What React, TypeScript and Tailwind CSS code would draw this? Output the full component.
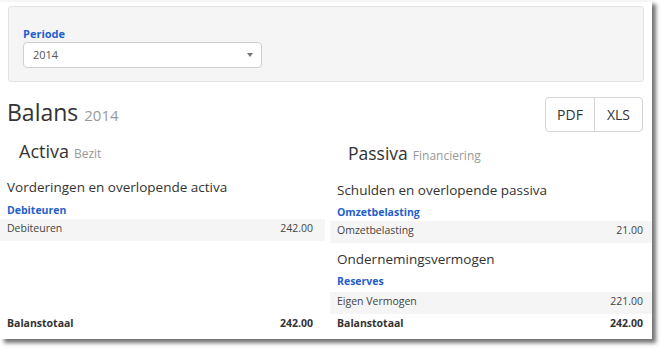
import React from "react";

type Row = { label: string; amount: string };

function SectionRow({ row, padRight }: { row: Row; padRight: string }) {
  return (
    <div className={`flex h-[22px] items-start justify-between bg-[#f5f5f5] pl-[7px] text-[10.5px] leading-[18px] text-[#444] ${padRight}`}>
      <span>{row.label}</span>
      <span>{row.amount}</span>
    </div>
  );
}

function Total({ amount, padRight }: { amount: string; padRight: string }) {
  return (
    <div className={`mt-auto flex justify-between pl-[7px] text-[10.5px] font-bold leading-[16px] text-[#333] ${padRight}`}>
      <span>Balanstotaal</span>
      <span>{amount}</span>
    </div>
  );
}

export default function App() {
  return (
    <div
      className="h-[351px] w-[663px] bg-white"
      style={{ fontFamily: '"Open Sans", "Noto Sans", sans-serif' }}
    >
      <div className="flex h-[339px] w-[652px] flex-col bg-white shadow-[4px_4px_4px_rgba(0,0,0,0.55)]">
        <div className="h-[2px] bg-[#f6f6f6]" />
        {/* filter panel */}
        <div className="ml-[8px] mt-[4px] h-[76px] w-[636px] rounded-[3px] border border-[#e3e3e3] bg-[#f5f5f5] pl-[14px] pt-[20px]">
          <div className="text-[11px] font-bold leading-[14px] text-[#1f5fcc]">Periode</div>
          <div className="relative mt-[1px] flex h-[26px] w-[239px] items-center rounded-[4px] border border-[#cfcfcf] bg-white pl-[9px] text-[11px] text-[#555]">
            2014
            <span className="absolute right-[8px] top-[10px] h-0 w-0 border-l-[3.5px] border-r-[3.5px] border-t-[4px] border-l-transparent border-r-transparent border-t-[#777]" />
          </div>
        </div>

        {/* title + export buttons */}
        <div className="mt-[15px] flex items-start justify-between pl-[7px] pr-[9px]">
          <div className="flex items-baseline gap-[6px] pt-[1px]">
            <span className="text-[23px] leading-[28px] text-[#333]">Balans</span>
            <span className="text-[15px] text-[#999]">2014</span>
          </div>
          <div className="flex h-[35px] rounded-[4px] border border-[#d5d5d5] bg-white text-[14px] text-[#333]">
            <div className="flex w-[49px] items-center justify-center border-r border-[#d5d5d5]">PDF</div>
            <div className="flex w-[47px] items-center justify-center">XLS</div>
          </div>
        </div>

        {/* two balance columns */}
        <div className="mt-[7px] grid flex-1 grid-cols-[325px_322px] gap-x-[5px] pb-[8px]">
          <div className="flex flex-col">
            <div className="flex items-baseline gap-[5px] pl-[19px] leading-[24px]">
              <span className="text-[18px] text-[#333]">Activa</span>
              <span className="text-[12px] text-[#999]">Bezit</span>
            </div>
            <div className="mt-[11px] pl-[7px] text-[13.5px] leading-[20px] text-[#333]">
              Vorderingen en overlopende activa
            </div>
            <div className="mt-[5px] pl-[7px] text-[10.5px] font-bold leading-[16px] text-[#1f5fcc]">Debiteuren</div>
            <div className="mt-[1px]">
              <SectionRow row={{ label: "Debiteuren", amount: "242.00" }} padRight="pr-[12px]" />
            </div>
            <Total amount="242.00" padRight="pr-[12px]" />
          </div>

          <div className="flex flex-col pt-[2px]">
            <div className="flex items-baseline gap-[5px] pl-[18px] leading-[24px]">
              <span className="text-[17.5px] text-[#333]">Passiva</span>
              <span className="text-[12px] text-[#999]">Financiering</span>
            </div>
            <div className="mt-[12px] pl-[7px] text-[13.5px] leading-[20px] text-[#333]">
              Schulden en overlopende passiva
            </div>
            <div className="mt-[4px] pl-[7px] text-[10.5px] font-bold leading-[16px] text-[#1f5fcc]">Omzetbelasting</div>
            <div className="mt-[1px]">
              <SectionRow row={{ label: "Omzetbelasting", amount: "21.00" }} padRight="pr-[9px]" />
            </div>
            <div className="mt-[6px] pl-[7px] text-[13.5px] leading-[20px] text-[#333]">Ondernemingsvermogen</div>
            <div className="mt-[4px] pl-[7px] text-[10.5px] font-bold leading-[16px] text-[#1f5fcc]">Reserves</div>
            <div className="mt-[3px]">
              <SectionRow row={{ label: "Eigen Vermogen", amount: "221.00" }} padRight="pr-[9px]" />
            </div>
            <Total amount="242.00" padRight="pr-[9px]" />
          </div>
        </div>
      </div>
    </div>
  );
}
